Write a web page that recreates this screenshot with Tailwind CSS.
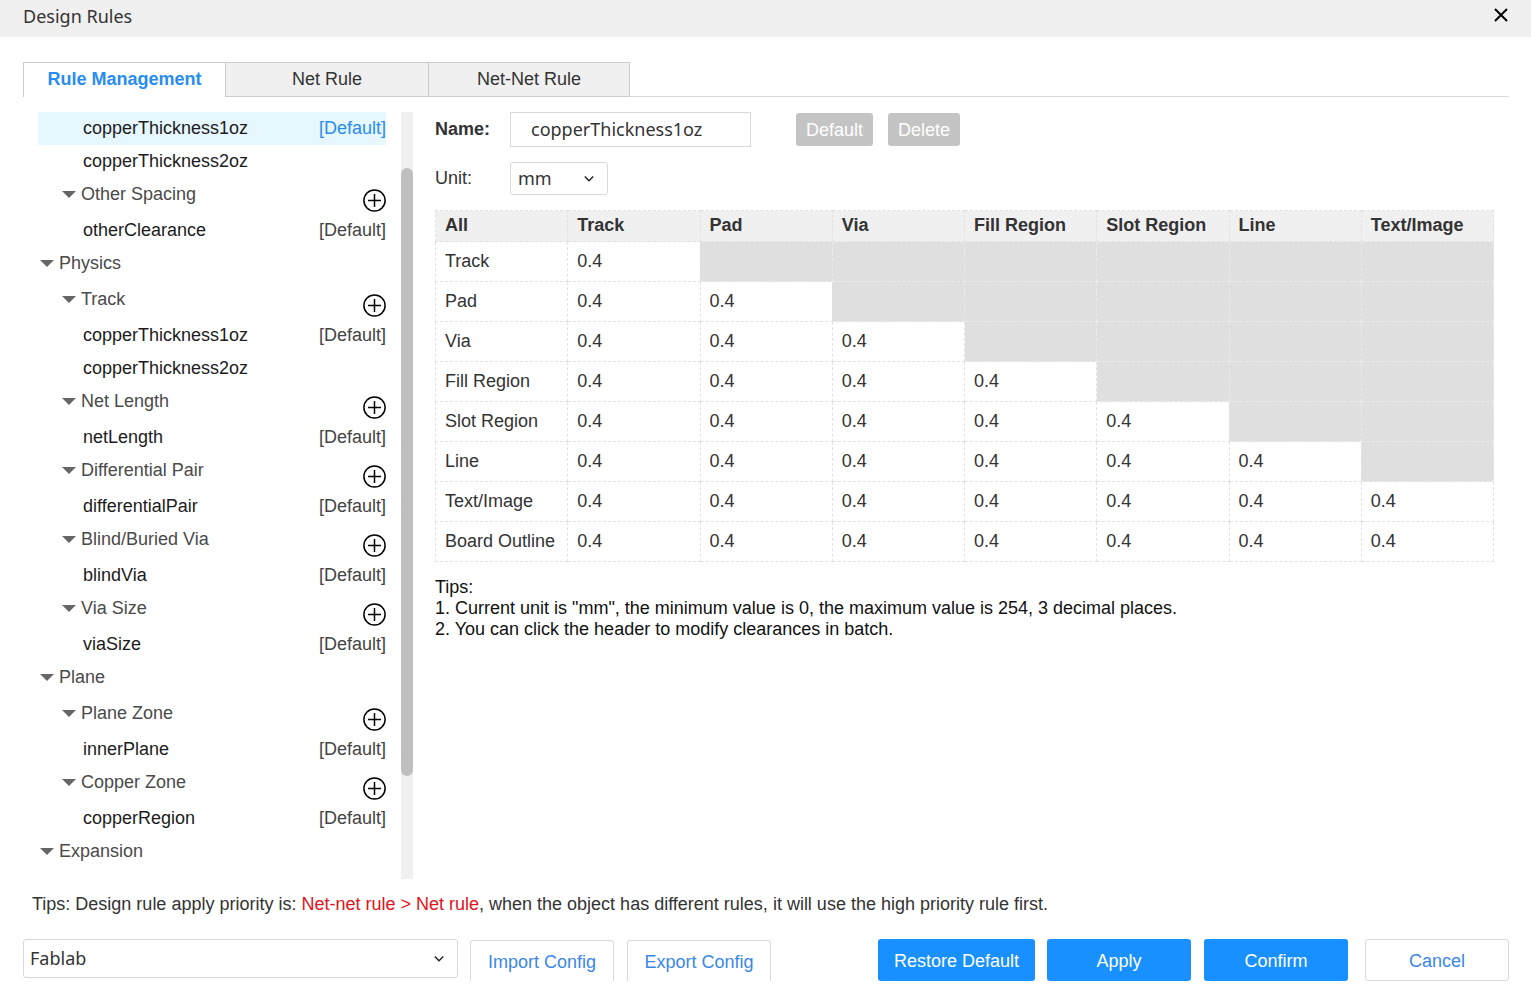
<!DOCTYPE html>
<html lang="en">
<head>
<meta charset="utf-8">
<title>Design Rules</title>
<script src="https://cdn.jsdelivr.net/npm/@tailwindcss/browser@4"></script>
</head>
<body class="flex min-h-screen flex-col bg-white font-['Liberation_Sans',Arial,sans-serif] text-lg leading-[21px] text-[#333]">
<header class="flex h-[37px] items-start justify-between bg-[#f0f0f0] pt-[6px] pr-[22px] pl-[23px]">
  <h1 class="font-['Noto_Sans',sans-serif]">Design Rules</h1>
  <button type="button" aria-label="Close" class="pt-px text-black"><svg class="size-4" viewBox="0 0 16 16" fill="none" stroke="currentColor" stroke-width="2"><path d="M2 2l12 12M14 2L2 14"/></svg></button>
</header>

<main class="flex flex-1 flex-col pt-[25px] pr-[22px] pb-[22px] pl-[23px]">
  <nav class="flex h-[35px]">
    <button type="button" class="w-[203px] border-t border-r border-l border-[#ccc] pb-px font-bold text-[#288cf0]">Rule Management</button>
    <button type="button" class="w-[202px] border-t border-b border-[#ccc] bg-[#f0f0f0]">Net Rule</button>
    <button type="button" class="w-[202px] border border-[#ccc] bg-[#f0f0f0]">Net-Net Rule</button>
    <div class="flex-1 border-b border-[#d9d9d9]"></div>
  </nav>

  <div class="flex flex-1 pt-[15px] pr-[15px] pl-[15px]">
    <aside class="flex h-[767px] w-[375px] shrink-0 justify-between">
      <ul id="tree" class="w-[348px]"></ul>
      <div class="w-3 bg-[#f0f0f0] pt-14"><div class="h-[608px] rounded-full bg-[#bfbfbf]"></div></div>
    </aside>

    <section class="ml-[22px] min-w-0 flex-1">
      <div class="flex h-[35px] items-center">
        <label for="name" class="w-[75px] font-bold">Name:</label>
        <input id="name" type="text" value="copperThickness1oz" class="h-[35px] w-[241px] border border-[#d9d9d9] px-5 pb-[2px] font-['Noto_Sans',sans-serif]">
        <button type="button" class="ml-[45px] h-[33px] rounded-[3px] bg-[#c4c4c4] px-[10px] pt-[2px] text-white">Default</button>
        <button type="button" class="ml-[15px] h-[33px] rounded-[3px] bg-[#c4c4c4] px-[10px] pt-[2px] text-white">Delete</button>
      </div>
      <div class="mt-[15px] flex h-[33px] items-center">
        <label for="unit" class="w-[75px]">Unit:</label>
        <div class="relative">
          <select id="unit" class="h-[33px] w-[98px] appearance-none rounded-[3px] border border-[#d9d9d9] bg-white pl-[7px] font-['Noto_Sans',sans-serif]"><option>mm</option></select>
          <svg class="pointer-events-none absolute top-[11px] right-[13px] size-3" viewBox="0 0 12 12" fill="none" stroke="#222" stroke-width="1.5"><path d="M1.8 3.5L6 7.7l4.2-4.2"/></svg>
        </div>
      </div>
      <table class="mt-[15px] w-full table-fixed border-collapse text-left">
        <thead><tr id="head" class="h-[31px] bg-[#f0f0f0]"></tr></thead>
        <tbody id="rows"></tbody>
      </table>
      <div class="mt-[15px] text-[#111]">
        <p>Tips:</p>
        <p>1. Current unit is "mm", the minimum value is 0, the maximum value is 254, 3 decimal places.</p>
        <p>2. You can click the header to modify clearances in batch.</p>
      </div>
    </section>
  </div>

  <p class="mt-[15px] pl-[9px]">Tips: Design rule apply priority is: <span class="text-[#e0141a]">Net-net rule &gt; Net rule</span>, when the object has different rules, it will use the high priority rule first.</p>

  <footer class="mt-6 flex h-[42px] items-start">
    <div class="relative">
      <select aria-label="Configuration" class="h-[39px] w-[435px] appearance-none rounded-[3px] border border-[#d9d9d9] bg-white pl-[6px] font-['Noto_Sans',sans-serif]"><option>Fablab</option></select>
      <svg class="pointer-events-none absolute top-[14px] right-[13px] size-3" viewBox="0 0 12 12" fill="none" stroke="#222" stroke-width="1.5"><path d="M1.8 3.5L6 7.7l4.2-4.2"/></svg>
    </div>
    <button type="button" class="mt-px ml-3 h-[41px] w-36 rounded-t-[3px] border-x border-t border-[#d9d9d9] pt-[2px] text-[#3b87e8]">Import Config</button>
    <button type="button" class="mt-px ml-[13px] h-[41px] w-36 rounded-t-[3px] border-x border-t border-[#d9d9d9] pt-[2px] text-[#3b87e8]">Export Config</button>
    <div class="ml-auto flex h-[42px]">
      <button type="button" class="w-[157px] rounded-[3px] bg-[#1890ff] pt-[2px] text-white">Restore Default</button>
      <button type="button" class="ml-3 w-36 rounded-[3px] bg-[#1890ff] pt-[2px] text-white">Apply</button>
      <button type="button" class="ml-[13px] w-36 rounded-[3px] bg-[#1890ff] pt-[2px] text-white">Confirm</button>
      <button type="button" class="ml-[17px] w-36 rounded-[3px] border border-[#d9d9d9] pt-[2px] text-[#3b87e8]">Cancel</button>
    </div>
  </footer>
</main>

<script>
  // kind: 0 = section, 1 = group with an add button, 2 = rule; third value marks the default rule
  const tree = [
    [2, 'copperThickness1oz', 1, 1], [2, 'copperThickness2oz'],
    [1, 'Other Spacing'], [2, 'otherClearance', 1],
    [0, 'Physics'],
    [1, 'Track'], [2, 'copperThickness1oz', 1], [2, 'copperThickness2oz'],
    [1, 'Net Length'], [2, 'netLength', 1],
    [1, 'Differential Pair'], [2, 'differentialPair', 1],
    [1, 'Blind/Buried Via'], [2, 'blindVia', 1],
    [1, 'Via Size'], [2, 'viaSize', 1],
    [0, 'Plane'],
    [1, 'Plane Zone'], [2, 'innerPlane', 1],
    [1, 'Copper Zone'], [2, 'copperRegion', 1],
    [0, 'Expansion'],
  ];
  const arrow = '<svg class="mr-[5px] h-[10px] w-[14px]" viewBox="0 0 14 10" fill="#666"><path d="M0 1h14L7 8z"/></svg>';
  const plus = '<button type="button" aria-label="Add rule" class="mt-[11px] size-[23px] text-black"><svg class="size-[23px]" viewBox="0 0 23 23" fill="none" stroke="currentColor" stroke-width="1.5"><circle cx="11.5" cy="11.5" r="10.6"/><path d="M5 11.5h13M11.5 5v13"/></svg></button>';
  document.getElementById('tree').innerHTML = tree.map(([kind, name, def, active]) => {
    if (kind === 2) return `<li class="flex h-[33px] items-center justify-between pl-[45px] ${active ? 'bg-[#e6f7ff]' : ''}"><span class="text-[#1c1c1c]">${name}</span>${def ? `<span class="${active ? 'text-[#288cf0]' : 'text-[#444]'}">[Default]</span>` : ''}</li>`;
    return `<li class="flex h-9 justify-between text-[#4a4a4a] ${kind ? 'pl-6' : 'pl-[2px]'}"><span class="flex h-[33px] items-center">${arrow}${name}</span>${kind ? plus : ''}</li>`;
  }).join('');

  const columns = ['Track', 'Pad', 'Via', 'Fill Region', 'Slot Region', 'Line', 'Text/Image'];
  document.getElementById('head').innerHTML = ['All', ...columns].map(c =>
    `<th scope="col" class="border border-dashed border-[#e2e2e2] pb-[2px] pl-[9px] font-bold">${c}</th>`).join('');
  document.getElementById('rows').innerHTML = [...columns, 'Board Outline'].map((r, i) =>
    `<tr class="h-10"><th scope="row" class="border border-dashed border-[#e2e2e2] pl-[9px] font-normal whitespace-nowrap">${r}</th>` +
    columns.map((c, j) => j <= i
      ? '<td class="border border-dashed border-[#e2e2e2] pl-[9px]">0.4</td>'
      : '<td class="border border-dashed border-[#ebebeb] bg-[#dfdfdf]"></td>').join('') + '</tr>').join('');
</script>
</body>
</html>
